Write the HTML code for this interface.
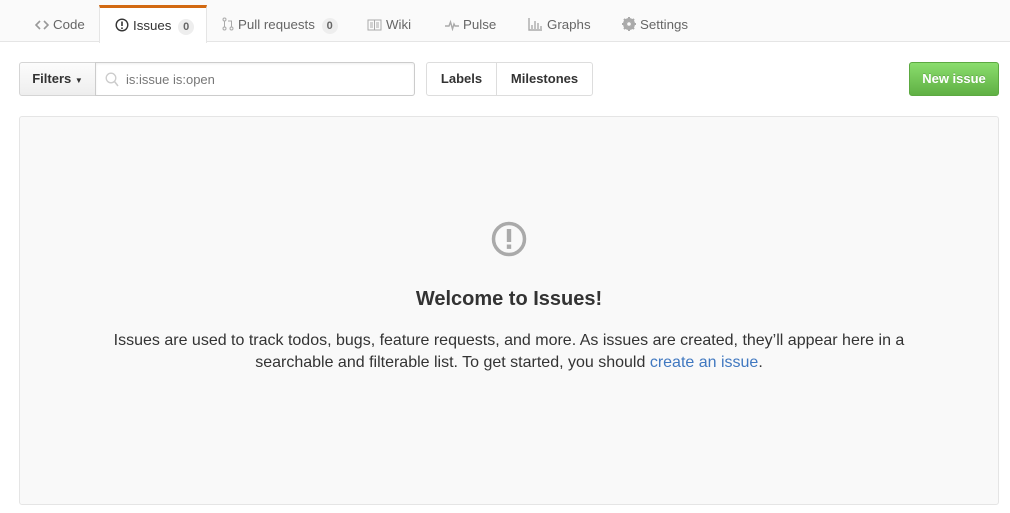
<!DOCTYPE html>
<html><head><style>
*{box-sizing:border-box;margin:0;padding:0}
body{width:1010px;height:513px;background:#fff;font-family:"Liberation Sans",Arial,sans-serif;font-size:14px;color:#333;position:relative;overflow:hidden}
.tabs{position:absolute;left:0;top:0;width:1010px;height:42px;background:#fafafa;border-bottom:1px solid #e5e5e5}
.tab{position:absolute;top:6px;height:36px;line-height:37px;color:#666;font-size:13.3px;white-space:nowrap}
.tab svg{vertical-align:-2px;margin-right:4px}
.sel{left:99px;top:5px;width:108px;background:#fff;border:1px solid #e5e5e5;border-top:3px solid #d26911;border-bottom:none;color:#333;padding-left:15px;line-height:35px;height:38px}
.cnt{display:inline-block;background:#eee;border-radius:10px;font-size:11px;padding:0 5px;line-height:16px;margin-left:3px;color:#666;font-weight:bold}
.btn{position:absolute;top:62px;height:34px;border:1px solid #ddd;line-height:32px;font-weight:bold;color:#333;font-size:13px;text-align:center}
.box{position:absolute;left:19px;top:116px;width:980px;height:389px;background:#f9f9f9;border:1px solid #e5e5e5;border-radius:3px}
</style></head><body>
<div class="tabs">
<div class="tab" style="left:35px"><svg width="14" height="12" viewBox="0 0 14 12"><path d="M5 2L1 6l4 4M9 2l4 4-4 4" fill="none" stroke="#999" stroke-width="1.6"/></svg>Code</div>
<div class="tab sel"><svg width="14" height="14" viewBox="0 0 14 14"><circle cx="7" cy="7" r="5.8" fill="none" stroke="#333" stroke-width="1.4"/><path d="M7 3.5v4.5" stroke="#333" stroke-width="1.6"/><circle cx="7" cy="10.2" r="0.9" fill="#333"/></svg>Issues <span class="cnt">0</span></div>
<div class="tab" style="left:222px"><svg width="12" height="14" viewBox="0 0 12 14"><circle cx="2.5" cy="2.5" r="1.5" fill="none" stroke="#aaa"/><circle cx="2.5" cy="11.5" r="1.5" fill="none" stroke="#aaa"/><circle cx="9.5" cy="11.5" r="1.5" fill="none" stroke="#aaa"/><path d="M2.5 4v6M9.5 10V4H6" fill="none" stroke="#aaa"/></svg>Pull requests <span class="cnt">0</span></div>
<div class="tab" style="left:367px"><svg width="15" height="12" viewBox="0 0 15 12"><rect x="1" y="1" width="13" height="10" fill="none" stroke="#aaa"/><path d="M7.5 1v10M3 4h3M3 6h3M3 8h3M9 4h3M9 6h3M9 8h3" stroke="#aaa"/></svg>Wiki</div>
<div class="tab" style="left:445px"><svg width="14" height="12" viewBox="0 0 14 12"><path d="M0 7h4l1.5-4 2 7L9 5l1 2h4" fill="none" stroke="#aaa" stroke-width="1.4"/></svg>Pulse</div>
<div class="tab" style="left:528px"><svg width="15" height="14" viewBox="0 0 15 14"><path d="M1 1v12h13M4 12V8M7 12V4M10 12V6M13 12V9" fill="none" stroke="#aaa" stroke-width="1.4"/></svg>Graphs</div>
<div class="tab" style="left:622px"><svg width="14" height="14" viewBox="0 0 14 14"><circle cx="7" cy="7" r="4.5" fill="none" stroke="#aaa" stroke-width="3"/><path d="M7 0v14M0 7h14M2 2l10 10M12 2L2 12" stroke="#aaa" stroke-width="2"/><circle cx="7" cy="7" r="1.8" fill="#fafafa"/></svg>Settings</div>
</div>
<div class="btn" style="left:19px;width:77px;background:linear-gradient(#fcfcfc,#eee);border-radius:3px 0 0 3px;border-color:#d5d5d5">Filters <span style="font-size:8px">▼</span></div>
<div style="position:absolute;left:95px;top:62px;width:320px;height:34px;border:1px solid #ccc;border-radius:0 3px 3px 0;background:#fff;box-shadow:inset 0 1px 2px rgba(0,0,0,.07)">
<svg style="position:absolute;left:9px;top:9px" width="14" height="15" viewBox="0 0 14 15"><circle cx="6" cy="6" r="4.8" fill="none" stroke="#ccc" stroke-width="1.3"/><path d="M9.5 9.5L13 14" stroke="#ccc" stroke-width="1.5"/></svg>
<span style="position:absolute;left:30px;top:9px;font-size:13px;color:#777">is:issue is:open</span></div>
<div class="btn" style="left:426px;width:71px;border-radius:3px 0 0 3px">Labels</div>
<div class="btn" style="left:496px;width:97px;border-radius:0 3px 3px 0">Milestones</div>
<div class="btn" style="left:909px;width:90px;background:linear-gradient(#8add6d,#60b044);border-color:#5ca941;color:#fff;border-radius:3px;text-shadow:0 -1px 0 rgba(0,0,0,.15)">New issue</div>
<div class="box">
<svg style="position:absolute;left:471px;top:104px" width="36" height="36" viewBox="0 0 36 36"><circle cx="18" cy="18" r="15.5" fill="none" stroke="#aaa" stroke-width="3.5"/><rect x="15.8" y="8" width="4.4" height="13" fill="#aaa"/><rect x="15.8" y="23.5" width="4.4" height="4.4" fill="#aaa"/></svg>
<div style="position:absolute;left:0;top:171px;width:978px;text-align:center;font-size:20px;font-weight:bold;color:#333">Welcome to Issues!</div>
<div style="position:absolute;left:80px;top:213px;width:818px;text-align:center;font-size:16px;line-height:22px;color:#333">Issues are used to track todos, bugs, feature requests, and more. As issues are created, they’ll appear here in a searchable and filterable list. To get started, you should <span style="color:#4078c0">create an issue</span>.</div>
</div>
</body></html>
